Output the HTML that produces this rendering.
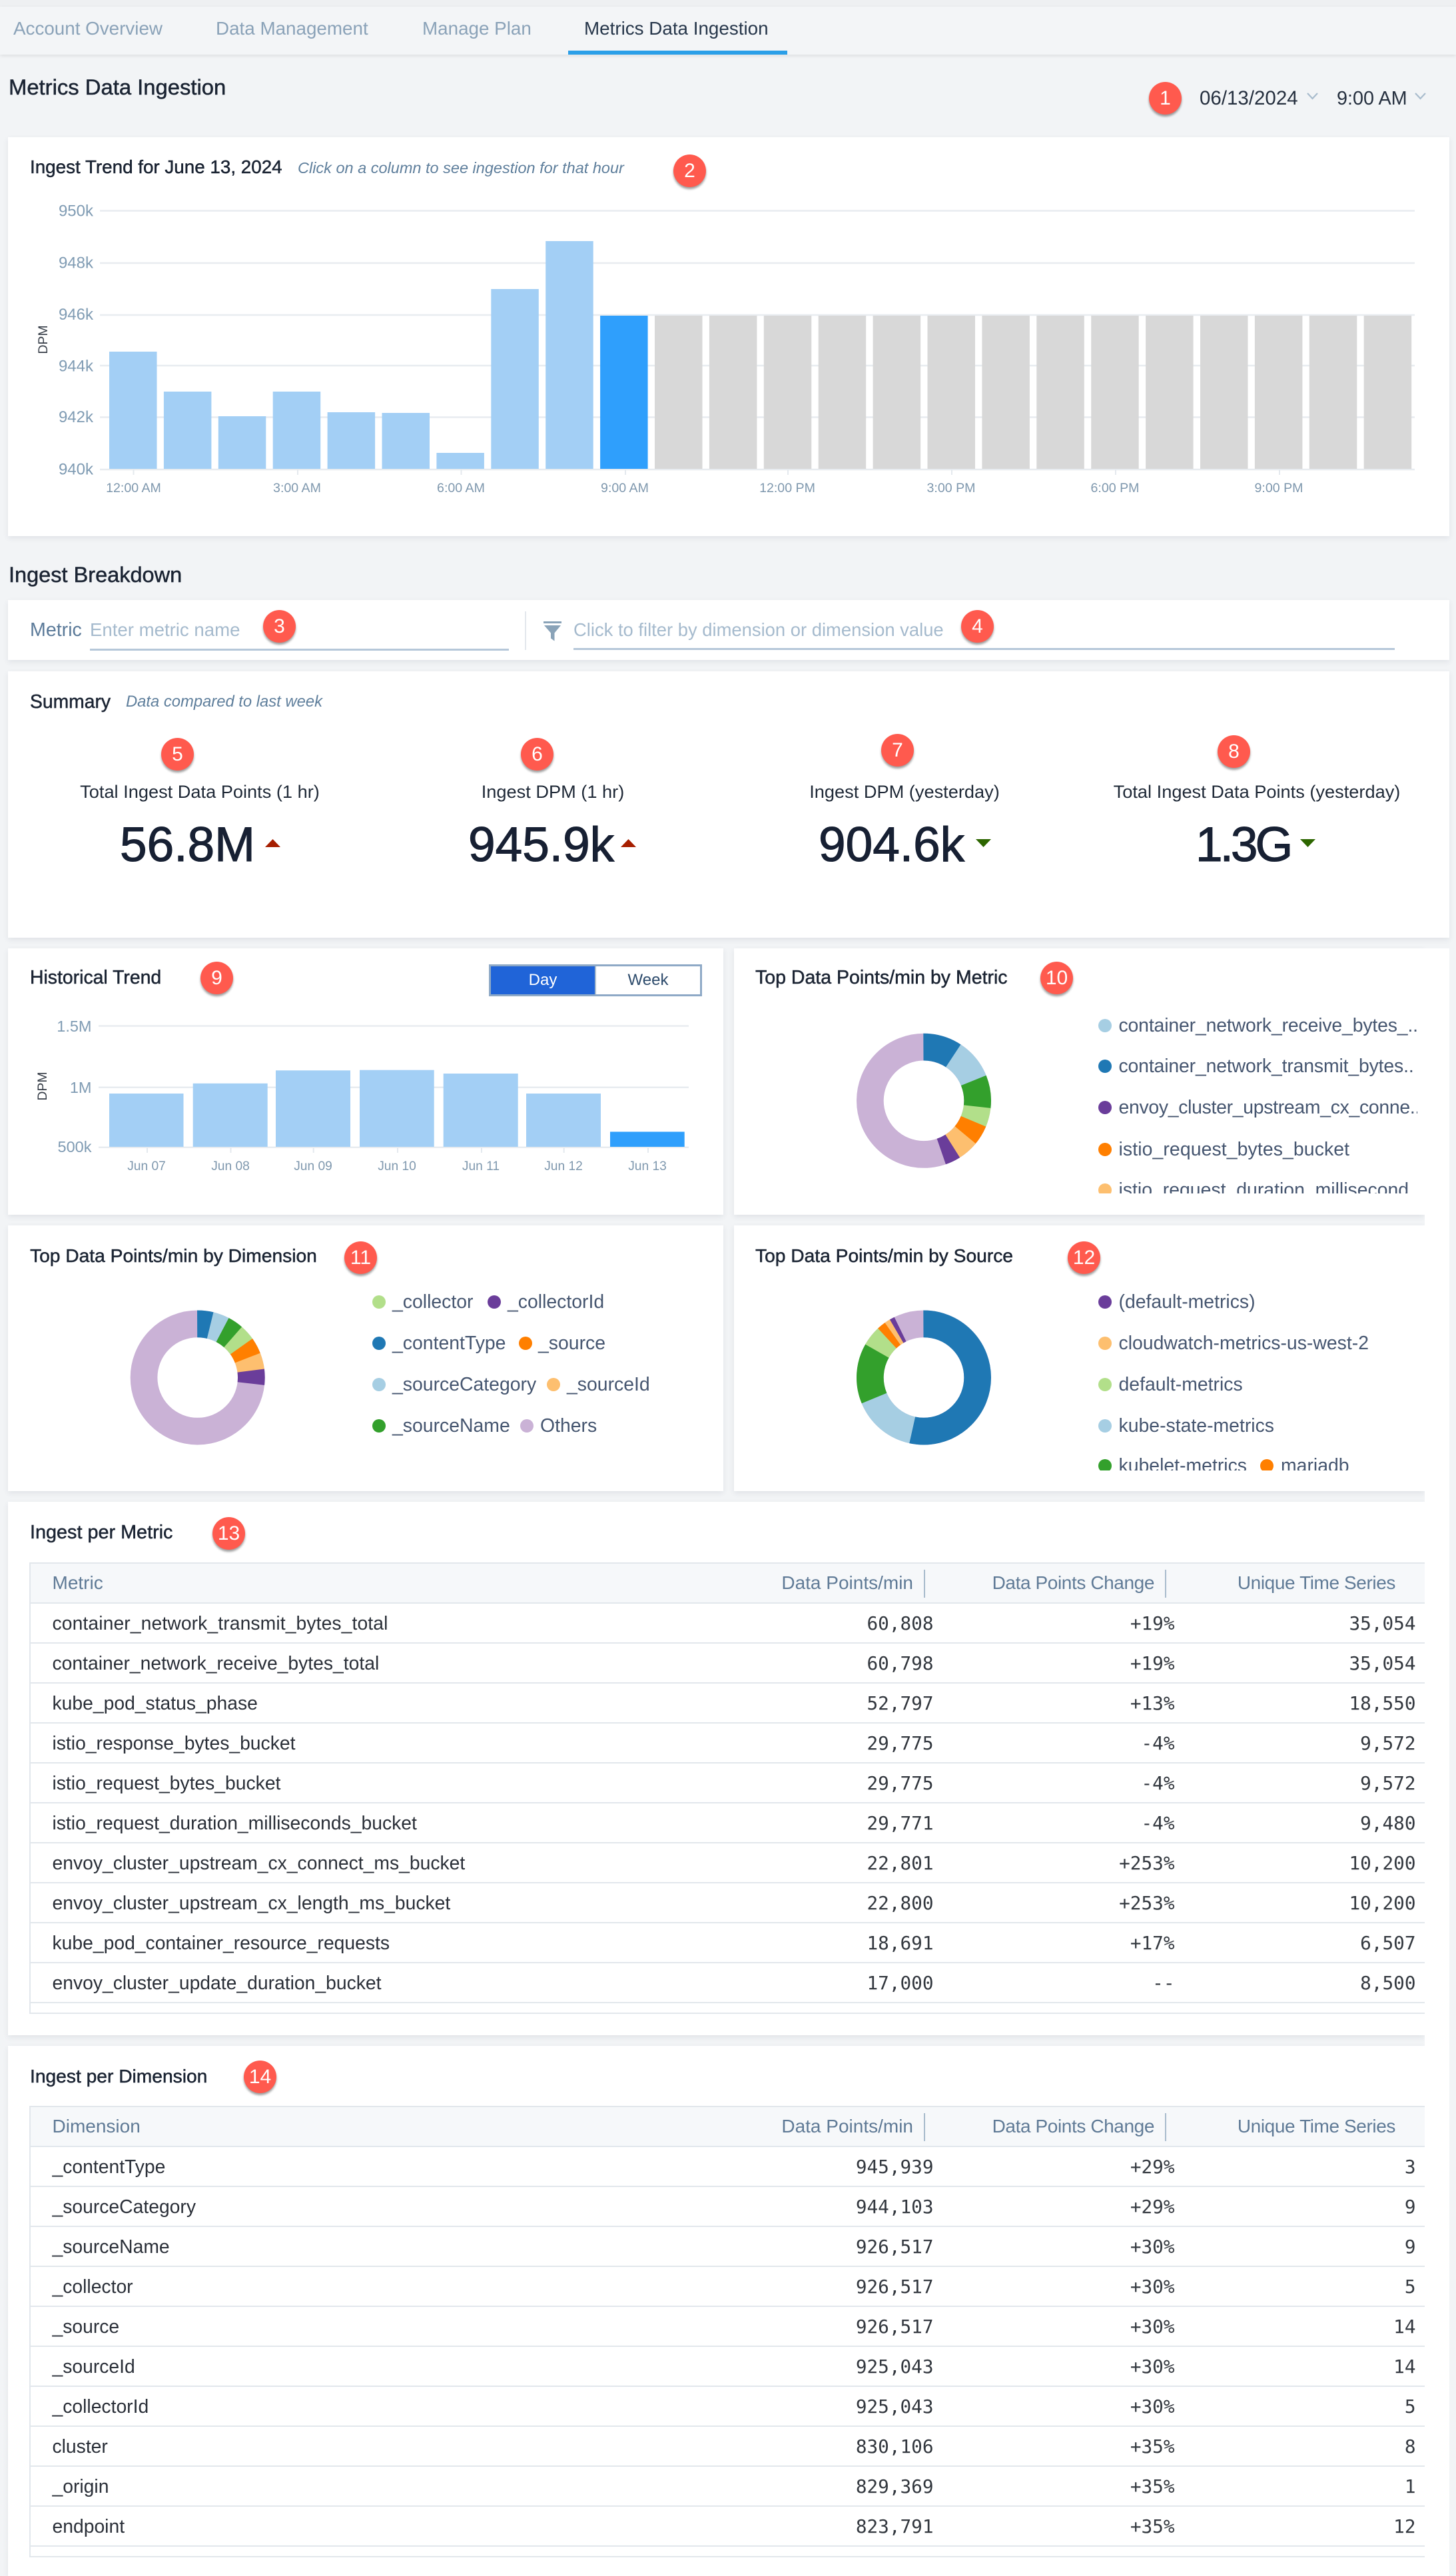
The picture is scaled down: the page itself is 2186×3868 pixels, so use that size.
<!DOCTYPE html>
<html lang="en">
<head>
<meta charset="utf-8">
<title>Metrics Data Ingestion</title>
<style>
html,body{margin:0;padding:0;background:#f2f4f6}
body{position:relative;width:2186px;height:3868px;overflow:hidden;font-family:"Liberation Sans",sans-serif;color:#1b2433}
.top{position:absolute;left:0;top:0;width:2186px;height:10px;background:#eef0f2}
.tabs{position:absolute;left:0;top:10px;width:2186px;height:72px;background:#f3f5f7;box-shadow:0 2px 5px rgba(0,0,0,.09)}
.ul{position:absolute;left:853px;top:76px;width:329px;height:6px;background:#2b9fe8}
.t{position:absolute;white-space:nowrap;line-height:40px;height:40px}
.tab{font-size:27.8px;color:#8aa2b8;top:23px}
.h1{font-size:32.8px;color:#1b2433;-webkit-text-stroke:.5px #1b2433}
.h2{font-size:28.2px;color:#1b2433;-webkit-text-stroke:.5px #1b2433}
.it{font-size:23.5px;font-style:italic;color:#5f7f9c}
.card{position:absolute;background:#fff;box-shadow:0 3px 8px rgba(40,60,80,.09)}
.b{position:absolute;width:49px;height:49px;border-radius:50%;background:#ff5a4e;color:#fff;font-size:30px;line-height:49px;text-align:center;box-shadow:0 3px 3px rgba(0,0,0,.38);z-index:5}
.ph{font-size:27.4px;color:#a5bacd}
.line{position:absolute;height:2.5px;background:#b5c7d9}
.lab{font-size:27.2px;color:#1f2937;transform:translateX(-50%)}
.big{font-size:73px;line-height:80px;height:80px;color:#172033;-webkit-text-stroke:1.1px #172033}
.lg{font-size:28.4px;color:#465670}
.d{position:absolute;width:20px;height:20px;border-radius:50%}
.clip{position:absolute;overflow:hidden}
.tw{position:absolute;left:44px;width:2095px;overflow:hidden}
table{border-collapse:separate;border-spacing:0;table-layout:fixed;width:2095px;border-left:2px solid #e2e7ec;border-top:2px solid #e2e7ec}
th,td{box-sizing:border-box;height:60px;border-bottom:2px solid #e2e7ec;padding:0;white-space:nowrap;overflow:hidden}
th{background:#f6f8fa;font-weight:400;font-size:28px;color:#5f7a96;text-align:right;padding-right:44px;position:relative}
th:nth-child(3),th:nth-child(4){letter-spacing:-.4px}
th:first-child,td:first-child{text-align:left;padding-left:32.5px;padding-right:0}
th i{position:absolute;right:26px;top:9px;width:2px;height:42px;background:#a9bccd}
td{font-size:28.3px;color:#2a2f38}
td.n{font-family:"DejaVu Sans Mono","Liberation Mono",monospace;font-size:27.7px;text-align:right;padding-right:13.5px;color:#33383f}
tr.e td{height:16px}
.tg{position:absolute;left:734px;top:1448px;width:320px;height:48px;box-sizing:border-box;border:3px solid #8ea9c6;background:#fff;font-size:24px;line-height:42px;text-align:center}
.tg div{position:absolute;top:0;height:42px}
.strip{position:absolute;left:2139px;top:1424px;width:37px;height:2444px;background:#fff;z-index:3}
svg.o{position:absolute;left:0;top:0;z-index:2}
svg text{font-family:"Liberation Sans",sans-serif}
</style>
</head>
<body>
<div class="top"></div>
<div class="tabs"></div>
<div class="ul"></div>
<div class="t tab" style="left:20px">Account Overview</div>
<div class="t tab" style="left:324px">Data Management</div>
<div class="t tab" style="left:634px">Manage Plan</div>
<div class="t tab" style="left:877px;color:#26364a">Metrics Data Ingestion</div>

<div class="t h1" style="left:13px;top:111px">Metrics Data Ingestion</div>
<div class="b" style="left:1725px;top:123px">1</div>
<div class="t" style="left:1801px;top:128px;font-size:29.5px;color:#26303f">06/13/2024</div>
<div class="t" style="left:2007px;top:128px;font-size:28.8px;color:#26303f">9:00 AM</div>

<div class="card" style="left:12px;top:206px;width:2164px;height:599px"></div>
<div class="t h2" style="left:45px;top:231px;font-size:27.8px">Ingest Trend for June 13, 2024</div>
<div class="t it" style="left:447px;top:232px">Click on a column to see ingestion for that hour</div>
<div class="b" style="left:1011px;top:232px">2</div>

<div class="t h1" style="left:13px;top:843px;font-size:32.5px">Ingest Breakdown</div>
<div class="card" style="left:12px;top:901px;width:2164px;height:90px"></div>
<div class="t" style="left:45px;top:926px;font-size:28.6px;color:#5b7a99">Metric</div>
<div class="t ph" style="left:135px;top:926px;font-size:27.6px">Enter metric name</div>
<div class="line" style="left:135px;top:974px;width:629px"></div>
<div style="position:absolute;left:788px;top:918px;width:2px;height:58px;background:#e4e8ed"></div>
<div class="t ph" style="left:861px;top:926px">Click to filter by dimension or dimension value</div>
<div class="line" style="left:861px;top:973px;width:1233px"></div>
<div class="b" style="left:395px;top:916px">3</div>
<div class="b" style="left:1443px;top:916px">4</div>

<div class="card" style="left:12px;top:1008px;width:2164px;height:400px"></div>
<div class="t h2" style="left:45px;top:1033px;font-size:28.3px">Summary</div>
<div class="t it" style="left:189px;top:1034px;font-size:23.8px">Data compared to last week</div>
<div class="b" style="left:242px;top:1108px">5</div>
<div class="b" style="left:782px;top:1108px">6</div>
<div class="b" style="left:1323px;top:1102px">7</div>
<div class="b" style="left:1828px;top:1104px">8</div>
<div class="t lab" style="left:300px;top:1169px">Total Ingest Data Points (1 hr)</div>
<div class="t lab" style="left:830px;top:1169px">Ingest DPM (1 hr)</div>
<div class="t lab" style="left:1358px;top:1169px">Ingest DPM (yesterday)</div>
<div class="t lab" style="left:1887px;top:1169px">Total Ingest Data Points (yesterday)</div>
<div class="t big" style="left:180px;top:1229px">56.8M</div>
<div class="t big" style="left:703px;top:1229px">945.9k</div>
<div class="t big" style="left:1229px;top:1229px">904.6k</div>
<div class="t big" style="left:1795px;top:1229px;letter-spacing:-4px">1.3G</div>

<div class="card" style="left:12px;top:1424px;width:1074px;height:400px"></div>
<div class="t h2" style="left:45px;top:1448px;font-size:28.4px">Historical Trend</div>
<div class="b" style="left:301px;top:1444px">9</div>
<div class="tg">
  <div style="left:0;width:156px;background:#2064d8;color:#fff">Day</div>
  <div style="left:156px;width:158px;color:#2c4a6b;border-left:2px solid #a9bccd;box-sizing:border-box">Week</div>
</div>

<div class="card" style="left:1102px;top:1424px;width:1037px;height:400px"></div>
<div class="t h2" style="left:1134px;top:1448px;font-size:28.5px">Top Data Points/min by Metric</div>
<div class="b" style="left:1562px;top:1444px">10</div>
<div class="clip" style="left:1640px;top:1520px;width:488px;height:272px">
  <div class="d" style="left:9px;top:9.5px;background:#a6cee3"></div><div class="t lg" style="left:39.5px;top:-.5px;letter-spacing:-.15px">container_network_receive_bytes_..</div>
  <div class="d" style="left:9px;top:71px;background:#1f78b4"></div><div class="t lg" style="left:39.5px;top:61px;letter-spacing:-.15px">container_network_transmit_bytes..</div>
  <div class="d" style="left:9px;top:133px;background:#6a3d9a"></div><div class="t lg" style="left:39.5px;top:123px;letter-spacing:-.3px">envoy_cluster_upstream_cx_conne..</div>
  <div class="d" style="left:9px;top:195.5px;background:#ff7f00"></div><div class="t lg" style="left:39.5px;top:185.5px;letter-spacing:.1px">istio_request_bytes_bucket</div>
  <div class="d" style="left:9px;top:256.7px;background:#fdbf6f"></div><div class="t lg" style="left:39.5px;top:246.7px">istio_request_duration_millisecond</div>
</div>

<div class="card" style="left:12px;top:1840px;width:1074px;height:399px"></div>
<div class="t h2" style="left:45px;top:1865px">Top Data Points/min by Dimension</div>
<div class="b" style="left:517px;top:1864px">11</div>
<div class="d" style="left:559px;top:1945px;background:#b2df8a"></div><div class="t lg" style="left:589px;top:1935px">_collector</div>
<div class="d" style="left:732px;top:1945px;background:#6a3d9a"></div><div class="t lg" style="left:762px;top:1935px">_collectorId</div>
<div class="d" style="left:559px;top:2007px;background:#1f78b4"></div><div class="t lg" style="left:589px;top:1997px">_contentType</div>
<div class="d" style="left:779px;top:2007px;background:#ff7f00"></div><div class="t lg" style="left:808px;top:1997px">_source</div>
<div class="d" style="left:559px;top:2069px;background:#a6cee3"></div><div class="t lg" style="left:589px;top:2059px">_sourceCategory</div>
<div class="d" style="left:821px;top:2069px;background:#fdbf6f"></div><div class="t lg" style="left:851px;top:2059px">_sourceId</div>
<div class="d" style="left:559px;top:2131px;background:#33a02c"></div><div class="t lg" style="left:589px;top:2121px">_sourceName</div>
<div class="d" style="left:781px;top:2131px;background:#cab2d6"></div><div class="t lg" style="left:811px;top:2121px">Others</div>

<div class="card" style="left:1102px;top:1840px;width:1037px;height:399px"></div>
<div class="t h2" style="left:1134px;top:1865px">Top Data Points/min by Source</div>
<div class="b" style="left:1603px;top:1864px">12</div>
<div class="clip" style="left:1640px;top:1930px;width:488px;height:278px">
  <div class="d" style="left:9px;top:15px;background:#6a3d9a"></div><div class="t lg" style="left:39.5px;top:5px">(default-metrics)</div>
  <div class="d" style="left:9px;top:77px;background:#fdbf6f"></div><div class="t lg" style="left:39.5px;top:67px">cloudwatch-metrics-us-west-2</div>
  <div class="d" style="left:9px;top:139px;background:#b2df8a"></div><div class="t lg" style="left:39.5px;top:129px">default-metrics</div>
  <div class="d" style="left:9px;top:201px;background:#a6cee3"></div><div class="t lg" style="left:39.5px;top:191px">kube-state-metrics</div>
  <div class="d" style="left:9px;top:261px;background:#33a02c"></div><div class="t lg" style="left:39.5px;top:251px">kubelet-metrics</div>
  <div class="d" style="left:252px;top:261px;background:#ff7f00"></div><div class="t lg" style="left:283px;top:251px">mariadb</div>
</div>

<div class="card" style="left:12px;top:2255px;width:2127px;height:801px"></div>
<div class="t h2" style="left:45px;top:2281px;font-size:28.8px">Ingest per Metric</div>
<div class="b" style="left:319px;top:2278px">13</div>
<div class="tw" style="top:2346px">
<table>
<colgroup><col style="width:1007px"><col style="width:362px"><col style="width:362px"><col style="width:362px"></colgroup>
<tr><th>Metric</th><th>Data Points/min<i></i></th><th>Data Points Change<i></i></th><th>Unique Time Series</th></tr>
<tr><td style="letter-spacing:.1px">container_network_transmit_bytes_total</td><td class="n">60,808</td><td class="n">+19%</td><td class="n">35,054</td></tr>
<tr><td>container_network_receive_bytes_total</td><td class="n">60,798</td><td class="n">+19%</td><td class="n">35,054</td></tr>
<tr><td>kube_pod_status_phase</td><td class="n">52,797</td><td class="n">+13%</td><td class="n">18,550</td></tr>
<tr><td>istio_response_bytes_bucket</td><td class="n">29,775</td><td class="n">-4%</td><td class="n">9,572</td></tr>
<tr><td>istio_request_bytes_bucket</td><td class="n">29,775</td><td class="n">-4%</td><td class="n">9,572</td></tr>
<tr><td>istio_request_duration_milliseconds_bucket</td><td class="n">29,771</td><td class="n">-4%</td><td class="n">9,480</td></tr>
<tr><td>envoy_cluster_upstream_cx_connect_ms_bucket</td><td class="n">22,801</td><td class="n">+253%</td><td class="n">10,200</td></tr>
<tr><td>envoy_cluster_upstream_cx_length_ms_bucket</td><td class="n">22,800</td><td class="n">+253%</td><td class="n">10,200</td></tr>
<tr><td>kube_pod_container_resource_requests</td><td class="n">18,691</td><td class="n">+17%</td><td class="n">6,507</td></tr>
<tr><td>envoy_cluster_update_duration_bucket</td><td class="n">17,000</td><td class="n">--</td><td class="n">8,500</td></tr>
<tr class="e"><td></td><td></td><td></td><td></td></tr>
</table>
</div>

<div class="card" style="left:12px;top:3072px;width:2127px;height:796px"></div>
<div class="t h2" style="left:45px;top:3097px">Ingest per Dimension</div>
<div class="b" style="left:366px;top:3094px">14</div>
<div class="tw" style="top:3162px">
<table>
<colgroup><col style="width:1007px"><col style="width:362px"><col style="width:362px"><col style="width:362px"></colgroup>
<tr><th>Dimension</th><th>Data Points/min<i></i></th><th>Data Points Change<i></i></th><th>Unique Time Series</th></tr>
<tr><td>_contentType</td><td class="n">945,939</td><td class="n">+29%</td><td class="n">3</td></tr>
<tr><td>_sourceCategory</td><td class="n">944,103</td><td class="n">+29%</td><td class="n">9</td></tr>
<tr><td>_sourceName</td><td class="n">926,517</td><td class="n">+30%</td><td class="n">9</td></tr>
<tr><td>_collector</td><td class="n">926,517</td><td class="n">+30%</td><td class="n">5</td></tr>
<tr><td>_source</td><td class="n">926,517</td><td class="n">+30%</td><td class="n">14</td></tr>
<tr><td>_sourceId</td><td class="n">925,043</td><td class="n">+30%</td><td class="n">14</td></tr>
<tr><td>_collectorId</td><td class="n">925,043</td><td class="n">+30%</td><td class="n">5</td></tr>
<tr><td>cluster</td><td class="n">830,106</td><td class="n">+35%</td><td class="n">8</td></tr>
<tr><td>_origin</td><td class="n">829,369</td><td class="n">+35%</td><td class="n">1</td></tr>
<tr><td>endpoint</td><td class="n">823,791</td><td class="n">+35%</td><td class="n">12</td></tr>
<tr class="e"><td></td><td></td><td></td><td></td></tr>
</table>
</div>

<div class="strip"></div>

<svg class="o" width="2186" height="3868" viewBox="0 0 2186 3868" xmlns="http://www.w3.org/2000/svg">
  <!-- date chevrons -->
  <g fill="none" stroke="#a9bccd" stroke-width="2.2">
    <path d="M1963 140l7.5 8 7.5-8"/>
    <path d="M2125 140l7.5 8 7.5-8"/>
  </g>
  <!-- filter icon -->
  <g fill="#8aa3b8">
    <rect x="816" y="933" width="27" height="3"/>
    <path d="M817 939h25l-9.500 11.500v12l-5.500-4v-8z"/>
  </g>
  <!-- summary triangles -->
  <path d="M398 1272l11.500-12 11.500 12z" fill="#a61e00"/>
  <path d="M932 1272l11.500-12 11.500 12z" fill="#a61e00"/>
  <path d="M1465 1260l11.500 12 11.500-12z" fill="#2d6600"/>
  <path d="M1952 1260l11.500 12 11.500-12z" fill="#2d6600"/>

  <!-- main chart -->
  <g stroke="#e8ecf0" stroke-width="2.500">
    <path d="M150 316.500H2124M150 395H2124M150 473H2124M150 549H2124M150 626.500H2124M150 705H2124"/>
  </g>
  <g stroke="#e4e9ee" stroke-width="2">
    <path d="M200.500 705v8M447 705v8M692.500 705v8M939 705v8M1183 705v8M1429 705v8M1675 705v8M1921 705v8"/>
  </g>
  <g fill="#a3cff5">
    <rect x="164" y="528" width="71.500" height="176"/>
    <rect x="245.900" y="588" width="71.500" height="116"/>
    <rect x="327.800" y="625" width="71.500" height="79"/>
    <rect x="409.700" y="588" width="71.500" height="116"/>
    <rect x="491.600" y="619" width="71.500" height="85"/>
    <rect x="573.500" y="620" width="71.500" height="84"/>
    <rect x="655.400" y="680" width="71.500" height="24"/>
    <rect x="737.300" y="434" width="71.500" height="270"/>
    <rect x="819.200" y="362" width="71.500" height="342"/>
  </g>
  <rect x="901.100" y="474" width="71.500" height="230" fill="#2f9ffc"/>
  <g fill="#d8d8d8">
    <rect x="983" y="474" width="71.500" height="230"/>
    <rect x="1064.900" y="474" width="71.500" height="230"/>
    <rect x="1146.800" y="474" width="71.500" height="230"/>
    <rect x="1228.700" y="474" width="71.500" height="230"/>
    <rect x="1310.600" y="474" width="71.500" height="230"/>
    <rect x="1392.500" y="474" width="71.500" height="230"/>
    <rect x="1474.400" y="474" width="71.500" height="230"/>
    <rect x="1556.300" y="474" width="71.500" height="230"/>
    <rect x="1638.200" y="474" width="71.500" height="230"/>
    <rect x="1720.100" y="474" width="71.500" height="230"/>
    <rect x="1802" y="474" width="71.500" height="230"/>
    <rect x="1883.900" y="474" width="71.500" height="230"/>
    <rect x="1965.800" y="474" width="71.500" height="230"/>
    <rect x="2047.700" y="474" width="71.500" height="230"/>
  </g>
  <g font-size="24" fill="#7f9bb3" text-anchor="end">
    <text x="140" y="324.500">950k</text>
    <text x="140" y="402.500">948k</text>
    <text x="140" y="480">946k</text>
    <text x="140" y="557.500">944k</text>
    <text x="140" y="634">942k</text>
    <text x="140" y="712.500">940k</text>
  </g>
  <g font-size="19.600" fill="#7f98ae" text-anchor="middle">
    <text x="200.500" y="739">12:00 AM</text>
    <text x="446" y="739">3:00 AM</text>
    <text x="692" y="739">6:00 AM</text>
    <text x="938" y="739">9:00 AM</text>
    <text x="1182" y="739">12:00 PM</text>
    <text x="1428" y="739">3:00 PM</text>
    <text x="1674" y="739">6:00 PM</text>
    <text x="1920" y="739">9:00 PM</text>
  </g>
  <text transform="translate(71 510) rotate(-90)" font-size="19.500" fill="#333a44" text-anchor="middle">DPM</text>

  <!-- historical chart -->
  <g stroke="#e8ecf0" stroke-width="2.500">
    <path d="M148 1540.500H1034M148 1632.800H1034M148 1722.700H1034"/>
  </g>
  <g stroke="#e4e9ee" stroke-width="2">
    <path d="M221 1723v8M346.500 1723v8M470.700 1723v8M597 1723v8M723 1723v8M846.700 1723v8M973 1723v8"/>
  </g>
  <g fill="#a3cff5">
    <rect x="164" y="1642" width="111.500" height="80"/>
    <rect x="289.700" y="1626.800" width="112" height="95.200"/>
    <rect x="414" y="1607.300" width="112" height="114.700"/>
    <rect x="540" y="1606.700" width="111.700" height="115.300"/>
    <rect x="665.700" y="1612" width="112" height="110"/>
    <rect x="790" y="1642" width="112" height="80"/>
  </g>
  <rect x="916" y="1699.400" width="111.700" height="22.600" fill="#2f9ffc"/>
  <g font-size="23.500" fill="#7f9bb3" text-anchor="end">
    <text x="137.500" y="1549">1.5M</text>
    <text x="137.500" y="1641">1M</text>
    <text x="137.500" y="1730">500k</text>
  </g>
  <g font-size="19.200" fill="#7f98ae" text-anchor="middle">
    <text x="220" y="1757">Jun 07</text>
    <text x="346" y="1757">Jun 08</text>
    <text x="470" y="1757">Jun 09</text>
    <text x="596" y="1757">Jun 10</text>
    <text x="722" y="1757">Jun 11</text>
    <text x="846" y="1757">Jun 12</text>
    <text x="972" y="1757">Jun 13</text>
  </g>
  <text transform="translate(70 1631) rotate(-90)" font-size="19.500" fill="#333a44" text-anchor="middle">DPM</text>

  <!-- donut: metric -->
  <g fill="none" stroke-width="40.700" transform="translate(1387 1652.800) rotate(-90)">
    <circle r="80.650" pathLength="360" stroke="#cab2d6"/>
    <circle r="80.650" pathLength="360" stroke="#1f78b4" stroke-dasharray="33.700 326.300"/>
    <circle r="80.650" pathLength="360" stroke="#a6cee3" stroke-dasharray="34.600 325.400" transform="rotate(33.700)"/>
    <circle r="80.650" pathLength="360" stroke="#33a02c" stroke-dasharray="28.400 331.600" transform="rotate(68.300)"/>
    <circle r="80.650" pathLength="360" stroke="#b2df8a" stroke-dasharray="16.300 343.700" transform="rotate(96.700)"/>
    <circle r="80.650" pathLength="360" stroke="#ff7f00" stroke-dasharray="17 343" transform="rotate(113)"/>
    <circle r="80.650" pathLength="360" stroke="#fdbf6f" stroke-dasharray="18 342" transform="rotate(130)"/>
    <circle r="80.650" pathLength="360" stroke="#6a3d9a" stroke-dasharray="13 347" transform="rotate(148)"/>
  </g>
  <!-- donut: dimension -->
  <g fill="none" stroke-width="40.700" transform="translate(296.700 2068.500) rotate(-90)">
    <circle r="80.650" pathLength="360" stroke="#cab2d6"/>
    <circle r="80.650" pathLength="360" stroke="#1f78b4" stroke-dasharray="14 346"/>
    <circle r="80.650" pathLength="360" stroke="#a6cee3" stroke-dasharray="14 346" transform="rotate(14)"/>
    <circle r="80.650" pathLength="360" stroke="#33a02c" stroke-dasharray="13.500 346.500" transform="rotate(28)"/>
    <circle r="80.650" pathLength="360" stroke="#b2df8a" stroke-dasharray="13.500 346.500" transform="rotate(41.500)"/>
    <circle r="80.650" pathLength="360" stroke="#ff7f00" stroke-dasharray="14 346" transform="rotate(55)"/>
    <circle r="80.650" pathLength="360" stroke="#fdbf6f" stroke-dasharray="14 346" transform="rotate(69)"/>
    <circle r="80.650" pathLength="360" stroke="#6a3d9a" stroke-dasharray="13.500 346.500" transform="rotate(83)"/>
  </g>
  <!-- donut: source -->
  <g fill="none" stroke-width="40.700" transform="translate(1387 2068.500) rotate(-90)">
    <circle r="80.650" pathLength="360" stroke="#cab2d6"/>
    <circle r="80.650" pathLength="360" stroke="#1f78b4" stroke-dasharray="192.800 167.200"/>
    <circle r="80.650" pathLength="360" stroke="#a6cee3" stroke-dasharray="55 305" transform="rotate(192.800)"/>
    <circle r="80.650" pathLength="360" stroke="#33a02c" stroke-dasharray="52.200 307.800" transform="rotate(247.800)"/>
    <circle r="80.650" pathLength="360" stroke="#b2df8a" stroke-dasharray="17.400 342.600" transform="rotate(300)"/>
    <circle r="80.650" pathLength="360" stroke="#ff7f00" stroke-dasharray="7.600 352.400" transform="rotate(317.400)"/>
    <circle r="80.650" pathLength="360" stroke="#fdbf6f" stroke-dasharray="5 355" transform="rotate(325)"/>
    <circle r="80.650" pathLength="360" stroke="#6a3d9a" stroke-dasharray="4 356" transform="rotate(330)"/>
  </g>
</svg>
</body>
</html>
